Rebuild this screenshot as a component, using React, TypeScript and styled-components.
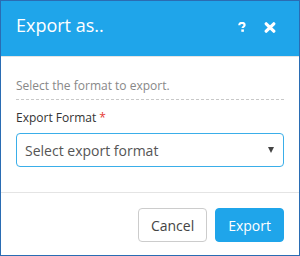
import React from "react";
import styled, { createGlobalStyle } from "styled-components";

const Global = createGlobalStyle`
  html, body { margin: 0; padding: 0; background: #ffffff; }
  body { font-family: "Open Sans", "Liberation Sans", sans-serif; }
  * { box-sizing: border-box; }
`;

const Dialog = styled.div`
  width: 300px;
  height: 256px;
  border: 1px solid #2a6cb3;
  background: #ffffff;
  display: flex;
  flex-direction: column;
`;

const Header = styled.div`
  height: 56px;
  background: #1fa5ea;
  border-bottom: 1px solid #e4e4e4;
  padding: 12px 23px 0 15px;
  display: flex;
  align-items: flex-start;
  justify-content: space-between;
`;

const Title = styled.h1`
  margin: 0;
  font-size: 18px;
  line-height: 24px;
  font-weight: 400;
  color: #ffffff;
`;

const Tools = styled.div`
  display: flex;
  align-items: center;
  gap: 18px;
  height: 22px;
  margin-top: 3px;
`;

const IconButton = styled.button`
  border: 0;
  padding: 0;
  background: transparent;
  display: flex;
  align-items: center;
  cursor: pointer;
`;

const Body = styled.div`
  padding: 21px 15px 25px 15px;
  border-bottom: 1px solid #e4e4e4;
`;

const Description = styled.p`
  margin: 0;
  font-size: 12px;
  line-height: 16px;
  color: #888888;
  padding-bottom: 5px;
  border-bottom: 1px dashed #c8c8c8;
`;

const Label = styled.label`
  display: block;
  margin-top: 10px;
  font-size: 12px;
  line-height: 16px;
  font-weight: 500;
  color: #333333;
`;

const Required = styled.span`
  color: #e53935;
`;

const SelectBox = styled.div`
  margin-top: 7px;
  height: 34px;
  border: 1px solid #3aaee9;
  border-radius: 4px;
  padding: 0 8px 0 8px;
  display: flex;
  align-items: center;
  justify-content: space-between;
  font-size: 14px;
  color: #555555;
`;

const Caret = styled.span`
  width: 0;
  height: 0;
  border-left: 3px solid transparent;
  border-right: 3px solid transparent;
  border-top: 6px solid #444444;
  margin-right: 1px;
`;

const Footer = styled.div`
  flex: 1;
  padding: 15px 15px 0 15px;
  display: flex;
  justify-content: flex-end;
  align-items: flex-start;
  gap: 8px;
`;

const Button = styled.button<{ $primary?: boolean }>`
  height: 34px;
  padding: 0 12px;
  border-radius: 4px;
  font-family: "Open Sans", "Liberation Sans", sans-serif;
  font-size: 14px;
  border: 1px solid ${(p) => (p.$primary ? "#1fa5ea" : "#cccccc")};
  background: ${(p) => (p.$primary ? "#1fa5ea" : "#ffffff")};
  color: ${(p) => (p.$primary ? "#ffffff" : "#444444")};
  cursor: pointer;
`;

const QuestionIcon = () => (
  <svg width="8" height="10" viewBox="0 0 8 10">
    <path
      d="M1.3 3.2 C1.3 1.6 2.5 0.9 4 0.9 C5.6 0.9 6.6 1.8 6.6 3 C6.6 4.6 4.6 4.8 4.6 6.1"
      fill="none"
      stroke="#ffffff"
      strokeWidth="2.2"
    />
    <rect x="3.3" y="7.4" width="2.6" height="2.4" fill="#ffffff" />
  </svg>
);

const CloseIcon = () => (
  <svg width="12" height="11" viewBox="0 0 12 11">
    <path
      d="M2.2 1.8 L9.8 9.2 M9.8 1.8 L2.2 9.2"
      fill="none"
      stroke="#ffffff"
      strokeWidth="3.2"
      strokeLinecap="round"
    />
  </svg>
);

export default function App() {
  return (
    <>
      <Global />
      <Dialog>
        <Header>
          <Title>Export as..</Title>
          <Tools>
            <IconButton aria-label="Help">
              <QuestionIcon />
            </IconButton>
            <IconButton aria-label="Close">
              <CloseIcon />
            </IconButton>
          </Tools>
        </Header>
        <Body>
          <Description>Select the format to export.</Description>
          <Label>
            Export Format <Required>*</Required>
          </Label>
          <SelectBox>
            <span>Select export format</span>
            <Caret />
          </SelectBox>
        </Body>
        <Footer>
          <Button>Cancel</Button>
          <Button $primary>Export</Button>
        </Footer>
      </Dialog>
    </>
  );
}
